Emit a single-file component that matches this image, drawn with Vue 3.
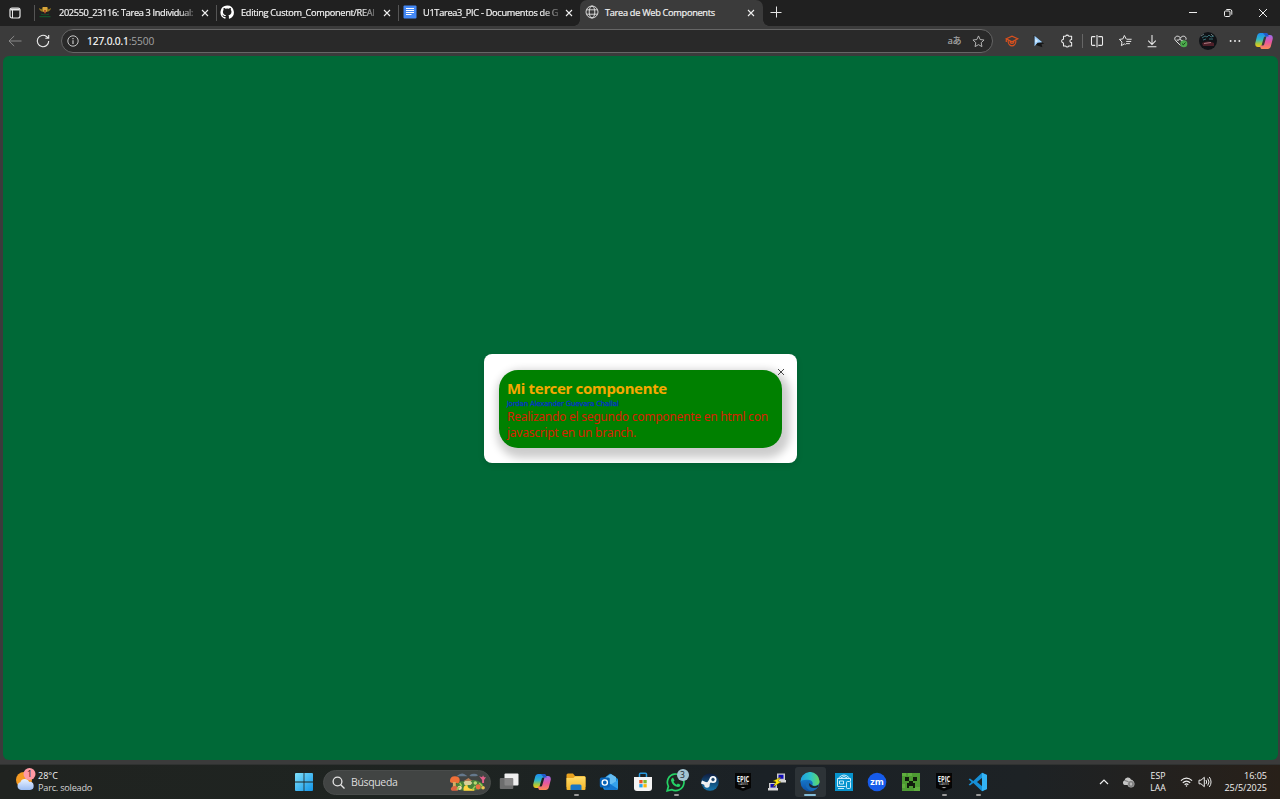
<script setup>
const tabs = [
  { icon: 'crest', title: '202550_23116: Tarea 3 Individual:', cls: 't1' },
  { icon: 'github', title: 'Editing Custom_Component/REAI', cls: 't2' },
  { icon: 'docs', title: 'U1Tarea3_PIC - Documentos de G', cls: 't3' },
  { icon: 'globe', title: 'Tarea de Web Components', cls: 't4', active: true }
]
const apps = ['view', 'copilot', 'folder', 'outlook', 'store', 'whatsapp', 'steam', 'epic', 'putty', 'edge', 'hub', 'zoom', 'creeper', 'epic', 'code']
const running = [2, 5, 13, 14]
</script>

<template>
  <div class="screen">
    <svg class="defs" width="0" height="0">
      <defs>
        <linearGradient id="gw" x1="0" y1="0" x2="1" y2="1"><stop offset="0" stop-color="#7fe0fb" /><stop offset="1" stop-color="#1295e8" /></linearGradient>
        <linearGradient id="gc1" x1="0" y1="0" x2="0" y2="1"><stop offset="0" stop-color="#1d8cf0" /><stop offset=".45" stop-color="#2fb6c9" /><stop offset=".75" stop-color="#a5c83d" /><stop offset="1" stop-color="#f6c419" /></linearGradient>
        <linearGradient id="gc2" x1="0" y1="0" x2="0" y2="1"><stop offset="0" stop-color="#9a6cf0" /><stop offset=".5" stop-color="#e7569f" /><stop offset="1" stop-color="#fb8a55" /></linearGradient>
        <linearGradient id="gf" x1="0" y1="0" x2="0" y2="1"><stop offset="0" stop-color="#ffdc68" /><stop offset="1" stop-color="#f5b62a" /></linearGradient>
        <linearGradient id="ge1" x1="0" y1="0" x2="1" y2="0"><stop offset="0" stop-color="#1f9de0" /><stop offset=".55" stop-color="#2fc4c6" /><stop offset="1" stop-color="#65d85a" /></linearGradient>
        <linearGradient id="ge2" x1="0" y1="0" x2="0" y2="1"><stop offset="0" stop-color="#1b8fe0" /><stop offset="1" stop-color="#0d4fa5" /></linearGradient>
        <linearGradient id="gs" x1="0" y1="0" x2="0" y2="1"><stop offset="0" stop-color="#101c3e" /><stop offset="1" stop-color="#1577ae" /></linearGradient>
        <linearGradient id="gcl" x1="0" y1="0" x2="0" y2="1"><stop offset="0" stop-color="#e9f2ff" /><stop offset="1" stop-color="#9cbdf3" /></linearGradient>
        <symbol id="copilot" viewBox="0 0 18 18">
          <path d="M5.200 1h5.500c1 0 1.600.7 1.900 1.600l.5 1.900H10.500C9.400 4.500 9 5 8.700 6L6.600 13.200C6.200 14.500 5.600 15 4.600 15H3C.8 15-.1 13.200.3 11L2.200 3.500C2.700 1.900 3.600 1 5.200 1z" fill="url(#gc1)" />
          <path d="M12.800 17H7.300c-1 0-1.600-.7-1.900-1.600L4.900 13.500H7.500c1.100 0 1.500-.5 1.800-1.500l2.100-7.200C11.800 3.500 12.400 3 13.400 3H15c2.200 0 3.100 1.800 2.700 4l-1.900 7.500c-.5 1.600-1.400 2.500-3 2.500z" fill="url(#gc2)" />
          <path d="M8 1h3.500c.9 0 1.400.8 1.700 1.700l.5 1.900h-3z" fill="#2059c9" />
        </symbol>
      </defs>
    </svg>

    <header class="tabstrip">
      <div class="workspace">
        <svg width="12" height="12" viewBox="0 0 12 12" fill="none" stroke="#e8e8e8"><rect x="1" y="1" width="10" height="10" rx="2" stroke-width="1.200" /><path d="M1.500 2.500h9" stroke-width="2" /><path d="M3.500 3v8" /></svg>
      </div>
      <div v-for="t in tabs" :key="t.title" class="tab" :class="[t.cls, { active: t.active }]">
        <svg v-if="t.icon === 'crest'" class="fav" viewBox="0 0 14 14"><path d="M1 3c.5 3 3 4 6 4s5.500-1 6-4L10.500 4.500 9.500 2H4.500L3.500 4.500z" fill="#9a7a20" /><path d="M5 2h4v4L7 8 5 6z" fill="#d9a53d" /><path d="M6.200 5h1.600l-.3 3.500h-1z" fill="#a33820" /><path d="M3 9c2 1 6 1 8 0M1.500 11.700h11" stroke="#14512b" stroke-width="1.200" fill="none" /></svg>
        <svg v-else-if="t.icon === 'github'" class="fav" viewBox="0.600 1 14.500 14"><path fill="#fff" d="M8 1.300a7 7 0 0 0-2.200 13.600c.4 0 .5-.2.500-.4v-1.400c-2 .4-2.400-.8-2.400-.8-.3-.8-.8-1-.8-1-.6-.5.1-.5.1-.5.7.1 1.100.8 1.100.8.700 1.100 1.700.8 2.100.6 0-.5.2-.8.4-1-1.500-.2-3.200-.8-3.200-3.500 0-.8.300-1.400.7-1.900 0-.2-.3-.9.100-1.900 0 0 .6-.2 1.900.7a6.500 6.500 0 0 1 3.500 0c1.300-.9 1.900-.7 1.900-.7.4 1 .1 1.700.1 1.900.5.500.7 1.100.7 1.900 0 2.700-1.600 3.300-3.200 3.500.3.200.5.600.5 1.300v2c0 .2.100.4.500.4A7 7 0 0 0 8 1.300z" /></svg>
        <svg v-else-if="t.icon === 'docs'" class="fav" viewBox="0 0 14 14"><rect x=".5" y=".5" width="13" height="13" rx="1" fill="#4388f5" /><path d="M3 3.500h8M3 5.500h8M3 7.500h8M3 9.500h5.500" stroke="#fff" stroke-width="1.100" /></svg>
        <svg v-else class="fav" viewBox="0 0 14 14" fill="none" stroke="#e6e6e6" stroke-width=".9"><circle cx="7" cy="7" r="6" /><ellipse cx="7" cy="7" rx="2.800" ry="6" /><path d="M1.500 4.800h11M1.500 9.200h11" /></svg>
        <span class="title">{{ t.title }}</span>
        <svg class="x" viewBox="0 0 8 8"><path d="M1 1l6 6M7 1L1 7" stroke="#f0f0f0" stroke-width="1.100" /></svg>
      </div>
      <svg class="plus" viewBox="0 0 12 12"><path d="M6.500 .5v11M.5 6.500h11" stroke="#e5e5e5" /></svg>
      <div class="winctl">
        <svg viewBox="0 0 10 10"><path d="M1 4.500h8" stroke="#eee" /></svg>
        <svg viewBox="0 0 10 10" fill="none" stroke="#eee"><rect x="1.500" y="3" width="5.500" height="5.500" rx="1" /><path d="M3.300 1.500h4A1.700 1.700 0 0 1 8.800 3v3.700" /></svg>
        <svg viewBox="0 0 10 10"><path d="M1 1l8 8M9 1L1 9" stroke="#eee" /></svg>
      </div>
    </header>

    <nav class="toolbar">
      <svg class="back" viewBox="0 0 14 12" fill="none" stroke="#8a8a8a"><path d="M13.500 6H1M6.200 1L1 6l5.200 5" /></svg>
      <svg class="reload" viewBox="0 0 14 14" fill="none" stroke="#ececec" stroke-width="1.100"><path d="M12.700 7A5.700 5.700 0 1 1 10.500 2.500L12.500 4.200M12.700 1v3.300H9.300" /></svg>
      <div class="address">
        <svg width="12" height="12" viewBox="0 0 12 12" fill="none" stroke="#d5d5d5"><circle cx="6" cy="6" r="5.200" stroke-width=".9" /><path d="M6 5.300V9M6 3v1.200" stroke-width="1.100" /></svg>
        <span class="url">127.0.0.1<i>:5500</i></span>
        <span class="translate">aあ</span>
        <svg class="star" viewBox="0 0 14 14" fill="none" stroke="#bdbdbd"><path d="M7 1l1.800 3.900 4.200.5-3.100 2.900.8 4.200L7 10.400l-3.700 2.100.8-4.200L1 5.400l4.200-.5z" stroke-linejoin="round" /></svg>
      </div>
      <div class="tools">
        <svg class="w1" viewBox="0 0 16 16" fill="none" stroke="#d9501e" stroke-width="1.400"><path d="M1.500 5.500l6.500-3 6.500 3L8 9zM3.500 7.500c0 4 2.500 6 4.500 6s4.500-2 4.500-6M5.500 8.500C6.500 11.500 9.500 11.500 10.500 8.500M1.500 5.500v3.500" /></svg>
        <svg class="w2" viewBox="0 0 16 16"><path d="M3 1l12 10-3 .4L13 15 4 12z" fill="#151515" /><path d="M4 2v12l3.500-4 5.500-.6z" fill="#9fd2ff" /><path d="M5 5v5l3-2z" fill="#dceeff" /></svg>
        <svg class="w3" viewBox="0 0 16 16" fill="none" stroke="#ececec" stroke-width="1.200"><path d="M4 2.500h2.500a1.800 1.800 0 0 1 3.400 0H13.300v3.700c-2.600-.2-2.600 3.700 0 3.500v4H9.900a1.800 1.800 0 0 1-3.400 0H4v-3.500a2.100 2.100 0 1 1 0-4.200z" stroke-linejoin="round" /></svg>
        <i class="sep"></i>
        <svg class="w4" viewBox="0 0 16 16" fill="none" stroke="#ececec" stroke-width="1.200"><path d="M6 3H3Q1.700 3 1.700 4v8q0 1 1.300 1H6M9.500 3H13q1.300 0 1.300 1v8q0 1-1.300 1H9.500M8 1v14" /></svg>
        <svg class="w5" viewBox="0 0 16 16" fill="none" stroke="#ececec" stroke-width="1.100"><path d="M9 6L6.700 1.700 5 5.600l-4 .6 3 2.900-.7 4.200 3.400-2L8 12M9.500 6H15M8.800 8.500H14.500M8.500 11H13" stroke-linejoin="round" /></svg>
        <svg class="w6" viewBox="0 0 16 16" fill="none" stroke="#ececec" stroke-width="1.200"><path d="M8 1v11M3.700 7.700L8 12 12.300 7.700M3 14.500h10" /></svg>
        <svg class="w7" viewBox="0 0 16 16" fill="none" stroke="#ececec" stroke-width="1.100"><path d="M8 13L2.300 7.500C.4 5.200 2 2.500 4.400 2.500 6 2.500 7.200 3.300 8 4.500 9 3 10 2.500 11.500 2.500c2.200 0 3.400 2.200 2.700 4M3.500 7H6l1.500-2 2 3.500L11 6.800" /><circle cx="11.800" cy="11" r="4" fill="#4cab4d" stroke="none" /><path d="M9.800 11l1.400 1.400 2.500-2.700" stroke="#173c17" /></svg>
        <svg class="w8" viewBox="0 0 18 18"><circle cx="9" cy="9" r="9" fill="#101317" /><path d="M3 6l3-2 2 1 2-2 2 2 3-1M4 8l3-1M10 7h4" stroke="#376d72" fill="none" /><path d="M3 11q6-3 12 0v3H4z" fill="#4e2029" /><path d="M5 11.500l7-1" stroke="#a97a80" /><path d="M2 4l3-2M12 2l2 2" stroke="#64777a" /></svg>
        <svg class="w9" viewBox="0 0 16 16" fill="#eee"><circle cx="3" cy="8" r="1.100" /><circle cx="8" cy="8" r="1.100" /><circle cx="13" cy="8" r="1.100" /></svg>
        <svg class="w10" viewBox="0 0 18 18"><use href="#copilot" /></svg>
      </div>
    </nav>

    <main class="page">
      <section class="modal">
        <svg class="close" viewBox="0 0 8 8"><path d="M1 1l6 6M7 1L1 7" stroke="#333" stroke-width=".9" /></svg>
        <article class="card">
          <h1>Mi tercer componente</h1>
          <h2>Jordan Alexander Guevara Challal</h2>
          <p>Realizando el segundo componente en html con<br />javascript en un branch.</p>
        </article>
      </section>
    </main>

    <footer class="taskbar">
      <div class="weather">
        <svg width="21" height="24" viewBox="0 0 21 24"><circle cx="9" cy="12" r="8" fill="#f59a22" /><path d="M6 22a4 4 0 0 1-.6-7.800 4.700 4.700 0 0 1 8.800-.3A4 4 0 0 1 15 22z" fill="url(#gcl)" /><circle cx="14.500" cy="6" r="6" fill="#ff99a4" /><text x="14.500" y="9.200" text-anchor="middle" font-size="9" fill="#222">1</text></svg>
        <div><div class="temp">28°C</div><div class="cond">Parc. soleado</div></div>
      </div>
      <svg class="start" viewBox="0 0 18 18" fill="url(#gw)"><path d="M0 1q0-1 1-1h7.600v8.600H0zM9.400 0H17q1 0 1 1v7.600H9.400zM0 9.400h8.600V18H1q-1 0-1-1zM9.400 9.400H18V17q0 1-1 1H9.400z" /></svg>
      <div class="search">
        <svg width="13" height="13" viewBox="0 0 13 13" fill="none" stroke="#e5e5e5" stroke-width="1.300"><circle cx="5.500" cy="5.500" r="4.400" /><path d="M8.700 8.700l3.800 3.800" /></svg>
        <span>Búsqueda</span>
        <svg class="art" viewBox="0 0 38 20">
          <path d="M9 3q4-3 7-1l3 2H8zM21 3q5-3 9 0l-2 1h-6z" fill="#65788c" /><path d="M3 15q8-8 15-5 8-5 17 2v5q-16 4-31 0z" fill="#47813b" />
          <path d="M1 9q0-5 5-5t5 4-3 3H4q-3 0-3-2z" fill="#ef7038" /><path d="M4 10h3v5H4z" fill="#d7ab61" />
          <path d="M15 10l5-3 4 4-2 2h-6z" fill="#d9cf98" /><path d="M15 9l5-3 4 3z" fill="#b87b54" />
          <path d="M2 18q-1-3 4-4l3 1v4H3z" fill="#dd6442" /><path d="M15 19q-1-6 4-6 0 5 7 4v2z" fill="#ffd43e" /><circle cx="11" cy="16" r="2.200" fill="#f2d6b2" /><circle cx="30" cy="15" r="2.600" fill="#e96f43" /><circle cx="35" cy="16" r="1.800" fill="#f0c454" /><circle cx="27" cy="11" r="1.800" fill="#b9d970" />
          <path d="M34 8l-3-4 3 1 1-2 1 2 2 0-2 3v3h-2z" fill="#e3608a" /><path d="M8 18l3-3M24 18l3-4M31 11l3 3M11 11l2 3" stroke="#9ecb54" stroke-width="1.500" />
        </svg>
      </div>
      <div class="apps">
        <div v-for="(a, i) in apps" :key="i" class="app" :class="{ running: running.includes(i), current: a === 'edge' }">
          <svg v-if="a === 'view'" viewBox="0 0 20 20"><rect x="5.500" y="1.500" width="14" height="12" rx="1" fill="#efefef" /><rect x=".8" y="6" width="13.500" height="11" rx="1" fill="#777" opacity=".88" /></svg>
          <svg v-else-if="a === 'copilot'" viewBox="-1 -1 20 20"><use href="#copilot" width="18" height="18" /></svg>
          <svg v-else-if="a === 'folder'" viewBox="0 0 20 20"><path d="M.5 3q0-1.500 1.500-1.500h5L9 4h9q1.500 0 1.500 1.500V15H.5z" fill="#e9a21e" /><path d="M.5 6h7L9 4.500h9.500q1 0 1 1V17q0 1-1 1h-17q-1 0-1-1z" fill="url(#gf)" /><path d="M4.500 18v-4q0-1.500 1.500-1.500h8q1.500 0 1.500 1.500v4z" fill="#1976c5" /></svg>
          <svg v-else-if="a === 'outlook'" viewBox="0 0 20 20"><path d="M4 7l7-5.500L19 7v9q0 2-2 2H7q-3 0-3-3z" fill="#1588d9" /><path d="M7 5l5-3 5 3v5l-5 3-5-3z" fill="#65bdf2" /><path d="M5 17L19 8v8q0 2-2 2H7z" fill="#34a2ec" /><path d="M5 8l14 9-2 1H6z" fill="#1477cf" /><rect x=".8" y="5.500" width="10" height="10" rx="1.500" fill="#0763b8" /><circle cx="5.800" cy="10.500" r="2.600" fill="none" stroke="#fff" stroke-width="1.400" /></svg>
          <svg v-else-if="a === 'store'" viewBox="0 0 20 20"><path d="M6.500 6V2.200q0-1 1-1h5q1 0 1 1V6" stroke="#2999dd" stroke-width="1.500" fill="none" /><path d="M1 5h18v11q0 3-3 3H4q-3 0-3-3z" fill="#f4f4f4" /><path d="M6.300 8h3.300v3.300H6.300z" fill="#e95325" /><path d="M10.400 8h3.300v3.300h-3.300z" fill="#7fb92d" /><path d="M6.300 12.100h3.300v3.300H6.300z" fill="#22a3ed" /><path d="M10.400 12.100h3.300v3.300h-3.300z" fill="#fbb70e" /></svg>
          <svg v-else-if="a === 'whatsapp'" viewBox="0 0 20 20"><path d="M1.200 18.800l1.200-4.500a8.300 8.300 0 1 1 3.300 3.300z" fill="#1e2523" stroke="#25d366" stroke-width="1.700" /><path d="M7 5.500l1.500 3-1 1.200q1 2 3.200 3l1.200-1.300 2.600 1.300q-.3 2.500-2.600 2.300-5.500-.7-6.900-6.500-.2-2 2-3z" fill="#25d366" /></svg>
          <svg v-else-if="a === 'steam'" viewBox="0 0 20 20"><circle cx="10" cy="10" r="8.800" fill="url(#gs)" /><path d="M1.500 10l6 2.500 3.500-5" stroke="#f5f5f5" stroke-width="3" fill="none" /><circle cx="7" cy="13" r="2.700" fill="#eee" /><circle cx="13" cy="7.500" r="3.500" fill="#fff" /><circle cx="13" cy="7.500" r="2" fill="#194168" stroke="#fff" stroke-width=".6" /></svg>
          <svg v-else-if="a === 'epic'" class="wide" viewBox="0 0 20 20"><path d="M2 1h16v15L10 19 2 16z" fill="#050505" /><text x="10" y="9.500" text-anchor="middle" font-size="8" textLength="12.500" lengthAdjust="spacingAndGlyphs" font-weight="bold" fill="#f2f2f2">EPIC</text><text x="10" y="13" text-anchor="middle" font-size="3.200" textLength="10" lengthAdjust="spacingAndGlyphs" fill="#ccc">GAMES</text><path d="M7.500 15.300h5L10 16.300z" fill="#ddd" /></svg>
          <svg v-else-if="a === 'putty'" viewBox="0 0 20 20"><path d="M10 1.500h8v7h-8zM2 11h8v6H2z" fill="#ccc" /><path d="M11.500 2.700h5v4h-5zM3.500 12h5v3.500h-5z" fill="#100bbb" /><path d="M9 8h10v2.500H9zM1 16h10v2.500H1z" fill="#d6d6d6" /><path d="M14 5L6 9l3 1-3 5 8-5-3-1z" fill="#ffe80a" stroke="#443c00" stroke-width=".4" /></svg>
          <svg v-else-if="a === 'edge'" viewBox="0 0 20 20"><circle cx="10" cy="10" r="9.500" fill="url(#ge2)" /><path d="M.5 10A9.500 9.500 0 0 1 19.500 9c.5 4-4.500 6-7.500 4.200 1.500-1.500.5-4.700-2.300-5.200C5.500 7.100 1 8 .5 10z" fill="url(#ge1)" /><path d="M7 9.500C3.500 12.500 7 18.500 12 18.900c2.500-.4 4.500-1.700 5.800-3.800-4 2-9.500.8-9.300-3.600q.2-1 1-1.900-1.400-.6-2.500-.1z" fill="#176ab7" /><path d="M12 13.200q3.200 2.200 6.600-.4l-.7 2.300q-4.300 2-7.900-.3-1.500-1.700-.7-3.800.8 1.500 2.700 2.200z" fill="#20272a" /></svg>
          <svg v-else-if="a === 'hub'" viewBox="0 0 20 20"><rect x="1" y="1" width="18" height="18" fill="#0794ce" /><g fill="none" stroke="#e0f5ff" stroke-width=".9"><path d="M4.500 6Q10 0 15.500 6M6.500 6Q10 3 13.500 6M3.500 6.500h13v3M3.500 6.500v8h8M5.500 9h4v3h-4z" /><rect x="12.500" y="9.500" width="4" height="7" rx="1" /><path d="M4 16.500h6" /></g></svg>
          <svg v-else-if="a === 'zoom'" viewBox="0 0 20 20"><circle cx="10" cy="10" r="9.300" fill="#165bea" /><text x="10" y="13" text-anchor="middle" font-size="9" textLength="13.500" lengthAdjust="spacingAndGlyphs" font-weight="bold" fill="#fff">zm</text></svg>
          <svg v-else-if="a === 'creeper'" viewBox="0 0 20 20"><rect x="1" y="1" width="18" height="18" fill="#4d9b32" /><path d="M1 1h4v3H1zM13 15h6v4h-6zM7 1h4v3H7zM1 12h3v4H1z" fill="#5fae3e" /><path d="M4 5h4v4H4zM12 5h4v4h-4zM8 9h4v2h2v5h-2v-2H8v2H6v-5h2z" fill="#111c0d" /></svg>
          <svg v-else viewBox="0 0 20 20"><path d="M14 .8l5 2.300v14L14 19.200 5.300 11 2 13.500.6 12.700 3.500 10 .6 7.300 2 6.500 5.300 9zm.2 5L9 10l5.200 4.200z" fill="#168fd6" fill-rule="evenodd" /><path d="M14 .8l5 2.300v14L14 19.200z" fill="#33b3f5" /></svg>
          <b v-if="a === 'whatsapp'" class="badge">3</b>
        </div>
      </div>
      <div class="tray">
        <svg class="chev" viewBox="0 0 10 6"><path d="M1 5l4-4 4 4" fill="none" stroke="#eee" stroke-width="1.200" /></svg>
        <svg class="cloud" viewBox="0 0 13 12"><path d="M2.500 9a2.400 2.400 0 0 1 0-4.500 3.400 3.400 0 0 1 6.500-1Q11.500 4 11.500 6L7 9z" fill="#c4c4c4" /><path d="M2.500 4.500L8 6" stroke="#777" /><circle cx="9" cy="8" r="3.300" fill="#777" stroke="#ccc" stroke-width=".5" /><path d="M8.300 6.500v3M9.700 6.500v3" stroke="#ddd" stroke-width=".8" /></svg>
        <div class="lang">ESP<br />LAA</div>
        <svg class="wifi" viewBox="0 0 14 12" fill="none" stroke="#eee" stroke-width="1.200"><path d="M1 4.500q6-5.500 12 0M3 6.800q4-3.600 8 0M5 9q2-1.800 4 0" /><circle cx="7" cy="10.300" r=".8" fill="#eee" stroke="none" /></svg>
        <svg class="vol" viewBox="0 0 14 12" fill="none" stroke="#eee"><path d="M1 4.200h2L6.300 1.300v9.400L3 7.800H1zM8 4q1.400 2 0 4M9.700 2.500q2.600 3.500 0 7M11.300 1q3.500 5 0 10" /></svg>
        <div class="clock">16:05<br />25/5/2025</div>
      </div>
    </footer>
  </div>
</template>

<style>
body { margin: 0; overflow: hidden; background: #3b3b3b; }
</style>

<style scoped>
.screen { width: 1280px; height: 799px; display: flex; flex-direction: column; overflow: hidden; background: #3b3b3b; font-family: "Open Sans", "Noto Sans", sans-serif; color: #f2f2f2; }
.screen * { box-sizing: border-box; }
.defs { position: absolute; }
svg { display: block; flex: none; }
.wide { overflow: visible; }
.tabstrip { height: 26px; flex: none; display: flex; align-items: center; background: #202020; }
.workspace { width: 34px; padding-left: 9px; }
.tab { position: relative; width: 182px; height: 26px; display: flex; align-items: center; padding: 0 7px 1px 4px; border-left: 1px solid transparent; }
.tab:not(.active)::before { content: ""; position: absolute; left: -1px; top: 5px; width: 1px; height: 16px; background: #555; }
.tab.active { width: 183px; background: #3b3b3b; border-radius: 7px 7px 0 0; border-left: 0; padding-left: 5px; padding-right: 8px; }
.tab.active::before, .tab.active::after { content: ""; position: absolute; bottom: 0; width: 6px; height: 6px; }
.tab.active::before { left: -6px; background: radial-gradient(circle at 0 0, transparent 5.500px, #3b3b3b 6px); }
.tab.active::after { right: -6px; background: radial-gradient(circle at 100% 0, transparent 5.500px, #3b3b3b 6px); }
.fav { width: 14px; height: 14px; margin-top: -1px; }
.t1 .fav, .t2 .fav { margin-left: -1px; margin-right: 1px; }
.title { margin-left: 6px; width: 137px; white-space: nowrap; font-size: 9.200px; letter-spacing: -.29px; line-height: 14px; -webkit-text-stroke: .2px #f2f2f2; }
.t1 .title { letter-spacing: -.33px; }
.tab:not(.active) .title { mask-image: linear-gradient(90deg, #000 87%, rgba(0, 0, 0, .2)); }
.x { width: 8px; height: 8px; margin-left: auto; margin-top: 1px; }
.plus { width: 12px; height: 12px; margin-left: 7px; margin-bottom: 2px; }
.winctl { display: flex; gap: 25px; margin-left: auto; margin-right: 12px; }
.winctl svg { width: 10px; height: 10px; }
.toolbar { height: 30px; flex: none; display: flex; align-items: center; background: #3b3b3b; padding-left: 8px; }
.back { width: 14px; height: 12px; }
.reload { width: 14px; height: 14px; margin-left: 14px; }
.address { width: 932px; height: 24px; margin-left: 11px; border: 1px solid #666; border-radius: 12px; background: #292929; display: flex; align-items: center; padding: 0 7px 0 5px; }
.url { margin-left: 8px; font-size: 10.200px; letter-spacing: -.13px; line-height: 14px; color: #fff; -webkit-text-stroke: .15px #fff; }
.url i { font-style: normal; color: #a2a2a2; -webkit-text-stroke: 0; }
.translate { margin-left: auto; font: 9px/14px "Open Sans", "Noto Sans CJK JP", sans-serif; letter-spacing: -.4px; color: #aaa; -webkit-text-stroke: .2px #aaa; }
.star { width: 13px; height: 13px; margin-left: 11px; }
.tools { display: flex; align-items: center; }
.tools svg { width: 14px; height: 14px; }
.tools .w1 { margin-left: 12px; }
.tools .w2 { margin-left: 12px; }
.tools .w3 { margin-left: 15px; }
.sep { width: 1px; height: 14px; margin-left: 8px; background: #666; }
.tools .w4 { margin-left: 7px; }
.tools .w5 { margin-left: 14px; width: 15px; }
.tools .w6 { margin-left: 12px; }
.tools .w7 { margin-left: 14px; width: 15px; }
.tools .w8 { margin-left: 11px; width: 18px; height: 18px; }
.tools .w9 { margin-left: 11px; }
.tools .w10 { margin-left: 13px; width: 18px; height: 18px; }
.page { width: 1275px; height: 704px; flex: none; margin-left: 3px; border-radius: 6px; background: #006937; display: grid; place-items: center; }
.modal { position: relative; width: 313px; height: 109px; padding: 16px 15px 15px 15px; border-radius: 8px; background: #fff; overflow: hidden; box-shadow: 0 2px 6px rgba(0, 0, 0, .12); }
.close { position: absolute; left: 293px; top: 14px; width: 8px; height: 8px; z-index: 2; }
.card { width: 283px; height: 78px; padding: 8px 8px 0; border-radius: 19px; background: #008000; box-shadow: 3px 5px 9px 5px rgba(0, 0, 0, .2); white-space: nowrap; }
h1, h2, p { margin: 0; }
h1 { font: bold 15px/20px "Noto Sans", sans-serif; letter-spacing: -.31px; color: #f5a800; }
h2 { font: 7px/9px "DejaVu Sans", sans-serif; letter-spacing: -.19px; color: #0030d0; margin-top: 2px; -webkit-text-stroke: .25px #0030d0; }
p { font: 12px/16px "Noto Sans", sans-serif; letter-spacing: -.25px; color: #d82000; }
.taskbar { height: 35px; flex: none; margin-top: 4px; display: flex; align-items: center; background: linear-gradient(90deg, #202320, #1e2421 35%, #1b2126 60%, #1d2225 80%, #282019); border-top: 1px solid #303231; }
.weather { width: 294px; height: 34px; padding-left: 15px; display: flex; align-items: center; font-size: 9.200px; line-height: 12px; }
.weather > div { margin-left: 2px; }
.weather svg { margin-bottom: 4px; }
.temp { font-size: 9px; }
.cond { color: #d5d5d5; letter-spacing: -.24px; }
.start { width: 18px; height: 18px; margin-left: 1px; }
.search { width: 168px; height: 25px; margin-left: 10px; padding: 0 4px 0 8px; border-radius: 13px; background: #414443; border: 1px solid #494c4b; display: flex; align-items: center; font-size: 10.500px; color: #ddd; }
.search span { margin-left: 6px; line-height: 14px; letter-spacing: -.35px; margin-top: -1px; }
.art { width: 37px; height: 20px; margin-left: auto; }
.apps { display: flex; margin-left: 1px; }
.app { position: relative; width: 33.500px; height: 34px; display: grid; place-items: center; }
.app svg { width: 20px; height: 20px; position: relative; z-index: 1; }
.app.running::after, .app.current::after { content: ""; position: absolute; bottom: 3px; left: calc(50% - 2px); width: 5px; height: 2px; border-radius: 1px; background: #999; }
.app.current::after { width: 12px; left: calc(50% - 6px); background: #86bdd9; }
.app.current::before { content: ""; position: absolute; left: 1px; top: 2px; width: 31px; height: 30px; border-radius: 3px; background: #2d3337; }
.badge { position: absolute; z-index: 2; left: 17px; top: 4px; width: 12px; height: 12px; border-radius: 50%; background: #a3c4d1; color: #17242a; font: 8.500px/12px "Open Sans", sans-serif; text-align: center; }
.tray { margin-left: auto; padding-right: 13px; display: flex; align-items: center; font-size: 9px; line-height: 12px; }
.chev { width: 10px; height: 6px; }
.cloud { width: 13px; height: 12px; margin-left: 13px; }
.lang { width: 18px; margin-left: 14px; text-align: center; font-size: 8.700px; }
.wifi { width: 13px; height: 12px; margin-left: 13px; }
.vol { width: 14px; height: 12px; margin-left: 5px; }
.clock { width: 46px; margin-left: 9px; text-align: right; font-size: 9px; white-space: nowrap; }
</style>
